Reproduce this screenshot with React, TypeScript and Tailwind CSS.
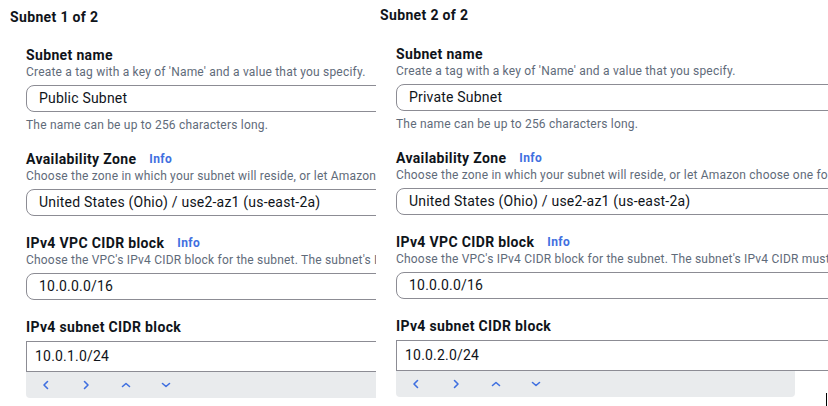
import React from 'react';

/* ──────────────────────────────────────────────
   Data
   ────────────────────────────────────────────── */
type Subnet = {
  title: string;
  name: string;
  az: string;
  vpcCidr: string;
  subnetCidr: string;
};

const subnets: Subnet[] = [
  {
    title: 'Subnet 1 of 2',
    name: 'Public Subnet',
    az: 'United States (Ohio) / use2-az1 (us-east-2a)',
    vpcCidr: '10.0.0.0/16',
    subnetCidr: '10.0.1.0/24',
  },
  {
    title: 'Subnet 2 of 2',
    name: 'Private Subnet',
    az: 'United States (Ohio) / use2-az1 (us-east-2a)',
    vpcCidr: '10.0.0.0/16',
    subnetCidr: '10.0.2.0/24',
  },
];

/* ──────────────────────────────────────────────
   Small pieces
   ────────────────────────────────────────────── */
function Info() {
  return <span className="ml-[13px] text-[12px] font-bold text-[#3f6fe0]">Info</span>;
}

function Label({ children, info }: { children: React.ReactNode; info?: boolean }) {
  return (
    <div className="flex items-center h-[18px] text-[14px] leading-[18px] font-bold tracking-[0.35px] text-[#0f141a] whitespace-nowrap">
      {children}
      {info && <Info />}
    </div>
  );
}

function Desc({ children }: { children: React.ReactNode }) {
  return <div className="h-[16px] text-[12px] leading-[16px] text-[#5f6b7a] whitespace-nowrap">{children}</div>;
}

function RoundInput({ value }: { value: string }) {
  return (
    <div className="mt-[5px] h-[27px] w-[640px] flex items-center pl-[12px] border border-[#8c8c94] rounded-[8px] text-[14px] text-[#0f141a] whitespace-nowrap">
      {value}
    </div>
  );
}

function Chevron({ d }: { d: string }) {
  return (
    <svg width="12" height="12" viewBox="0 0 12 12" fill="none" stroke="#3f6fe0" strokeWidth="1.6" strokeLinecap="round" strokeLinejoin="round">
      <path d={d} />
    </svg>
  );
}

function CodeInput({ value }: { value: string }) {
  return (
    <div className="mt-[5px]">
      <div className="h-[31px] w-[640px] flex items-center pl-[8px] border border-[#8c8c94] text-[14px] text-[#0f141a] whitespace-nowrap">
        {value}
      </div>
      <div className="h-[26px] w-[399px] bg-[#e9ebed] rounded-b-[4px] flex items-center pl-[14px] gap-[28px]">
        <Chevron d="M7.5 2.5 4 6l3.5 3.5" />
        <Chevron d="M4.5 2.5 8 6 4.5 9.5" />
        <Chevron d="M2.5 7.5 6 4.5l3.5 3" />
        <Chevron d="M2.5 4.5 6 7.5l3.5-3" />
      </div>
    </div>
  );
}

/* ──────────────────────────────────────────────
   Subnet panel
   ────────────────────────────────────────────── */
function SubnetPanel({ s, first }: { s: Subnet; first: boolean }) {
  return (
    <div className={first ? 'w-[376px] shrink-0 overflow-hidden pt-[7px] pl-[10px]' : 'flex-1 overflow-hidden pt-[5px]'}>
      <div className="h-[20px] text-[14px] leading-[20px] font-bold tracking-[0.35px] text-[#0f141a] whitespace-nowrap">{s.title}</div>

      <div className={first ? 'pl-[16px] mt-[19px]' : 'pl-[16px] mt-[20px]'}>
        <Label>Subnet name</Label>
        <Desc>Create a tag with a key of 'Name' and a value that you specify.</Desc>
        <RoundInput value={s.name} />
        <div className="mt-[5px]">
          <Desc>The name can be up to 256 characters long.</Desc>
        </div>

        <div className="mt-[17px]">
          <Label info>Availability Zone</Label>
          <Desc>Choose the zone in which your subnet will reside, or let Amazon choose one for you.</Desc>
          <RoundInput value={s.az} />
        </div>

        <div className="mt-[18px]">
          <Label info>IPv4 VPC CIDR block</Label>
          <Desc>Choose the VPC's IPv4 CIDR block for the subnet. The subnet's IPv4 CIDR must lie within this block.</Desc>
          <RoundInput value={s.vpcCidr} />
        </div>

        <div className="mt-[18px]">
          <Label>IPv4 subnet CIDR block</Label>
          <CodeInput value={s.subnetCidr} />
        </div>
      </div>
    </div>
  );
}

/* ──────────────────────────────────────────────
   App
   ────────────────────────────────────────────── */
export default function App() {
  return (
    <div
      className="relative w-[828px] h-[406px] bg-white flex gap-[4px] overflow-hidden tracking-[0.2px]"
      style={{ fontFamily: 'Roboto, "Noto Sans", sans-serif' }}
    >
      {subnets.map((s, i) => (
        <SubnetPanel key={s.title} s={s} first={i === 0} />
      ))}
      {/* text caret at the edge of the capture */}
      <div className="absolute left-[826px] top-[393px] w-[1px] h-[13px] bg-black" />
    </div>
  );
}
